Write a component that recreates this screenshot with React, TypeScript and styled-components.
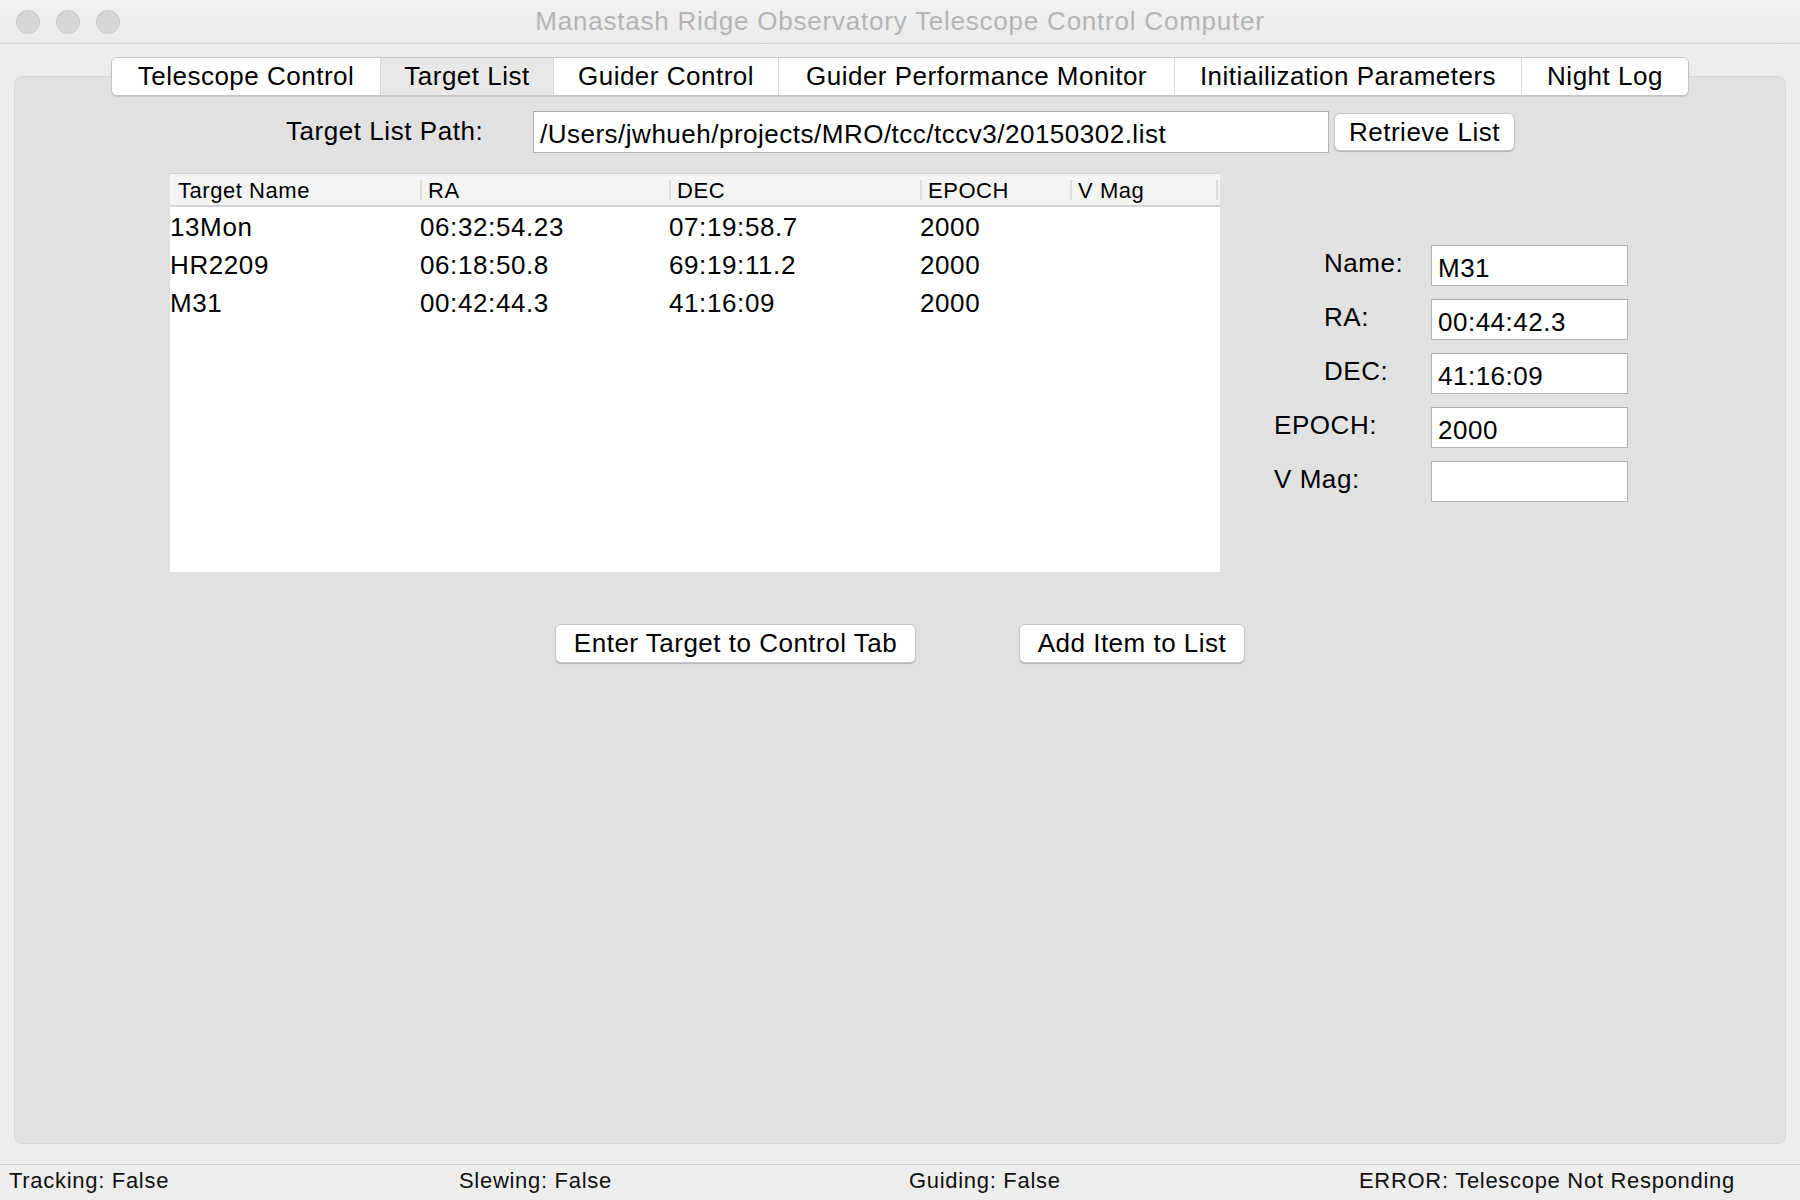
import React from 'react'
import styled, { createGlobalStyle } from 'styled-components'

const GlobalStyle = createGlobalStyle`
  html, body {
    margin: 0;
    padding: 0;
    background: #ececec;
    font-family: "Liberation Sans", Arial, sans-serif;
    color: #000;
  }
  * { box-sizing: border-box; }
`

const Window = styled.div`
  width: 1800px;
  height: 1200px;
  display: flex;
  flex-direction: column;
  background: #ececec;
  overflow: hidden;
`

const TitleBar = styled.div`
  height: 44px;
  flex-shrink: 0;
  display: grid;
  grid-template-columns: 1fr auto 1fr;
  align-items: center;
  background: linear-gradient(#f2f2f2, #ebebeb);
  border-bottom: 1px solid #d2d2d2;
`

const Lights = styled.div`
  display: flex;
  gap: 16px;
  padding-left: 16px;
`

const Light = styled.span`
  width: 24px;
  height: 24px;
  border-radius: 50%;
  background: #d6d6d6;
  border: 1px solid #c9c9c9;
`

const Title = styled.div`
  font-size: 26px;
  letter-spacing: 0.78px;
  color: #b4b4b4;
  padding-bottom: 1px;
`

const Main = styled.div`
  flex: 1;
  display: flex;
  flex-direction: column;
  align-items: center;
  padding: 13px 14px 20px;
`

const TabBar = styled.div`
  display: flex;
  height: 39px;
  background: #fff;
  border: 1px solid #c4c4c4;
  border-radius: 6px;
  box-shadow: 0 1px 1px rgba(0, 0, 0, 0.12);
  position: relative;
  z-index: 1;
  overflow: hidden;
`

const Tab = styled.div<{ $active?: boolean; $w: number }>`
  width: ${p => p.$w}px;
  display: flex;
  align-items: center;
  justify-content: center;
  font-size: 26px;
  letter-spacing: 0.5px;
  background: ${p => (p.$active ? '#e8e8e8' : '#fff')};
  border-left: 1px solid #dadada;
  &:first-child { border-left: none; }
`

const Panel = styled.div`
  align-self: stretch;
  flex: 1;
  margin-top: -20px;
  background: #e1e1e1;
  border: 1px solid #d7d7d7;
  border-radius: 8px;
  padding-top: 34px;
  display: flex;
  flex-direction: column;
`

const PathRow = styled.div`
  display: flex;
  align-items: center;
  padding-left: 271px;
`

const Label = styled.div<{ $indent?: number }>`
  font-size: 26px;
  letter-spacing: 0.55px;
  padding-left: ${p => p.$indent || 0}px;
  padding-bottom: 5px;
`

const PathLabel = styled(Label)`
  width: 247px;
  padding-bottom: 2px;
`

const Field = styled.div<{ $w: number; $h: number }>`
  width: ${p => p.$w}px;
  height: ${p => p.$h}px;
  background: #fff;
  border: 1px solid #b3b3b3;
  border-top-color: #a8a8a8;
  display: flex;
  align-items: center;
  padding: 5px 6px 0;
  font-size: 26px;
  letter-spacing: 0.5px;
  white-space: nowrap;
  overflow: hidden;
`

const Button = styled.div<{ $w: number }>`
  width: ${p => p.$w}px;
  height: 39px;
  display: flex;
  align-items: center;
  justify-content: center;
  background: #fff;
  border: 1px solid #c6c6c6;
  border-radius: 6px;
  box-shadow: 0 1px 1px rgba(0, 0, 0, 0.2);
  font-size: 26px;
  letter-spacing: 0.5px;
  white-space: nowrap;
`

const RetrieveButton = styled(Button)`
  margin-left: 5px;
  height: 38px;
`

const MiddleRow = styled.div`
  display: flex;
  align-items: flex-start;
  margin-top: 20px;
  padding-left: 155px;
`

const Table = styled.div`
  width: 1050px;
  height: 399px;
  background: #fff;
  border-top: 1px solid #d2d2d2;
`

const Cols = `grid-template-columns: 250px 249px 251px 150px 1fr;`

const HeaderRow = styled.div`
  display: grid;
  ${Cols}
  height: 33px;
  background: #f4f4f4;
  border-bottom: 2px solid #d2d2d2;
`

const HeaderCell = styled.div`
  display: flex;
  align-items: center;
  padding: 2px 0 0 8px;
  font-size: 22px;
  letter-spacing: 0.55px;
  position: relative;
  &:not(:first-child)::before, &:last-child::after {
    content: '';
    position: absolute;
    top: 6px;
    bottom: 5px;
    width: 2px;
    background: #dcdcdc;
  }
  &:not(:first-child)::before { left: 0; }
  &:last-child::after { right: 2px; }
`

const Row = styled.div`
  display: grid;
  ${Cols}
  height: 38px;
  align-items: center;
  padding-top: 2px;
`

const Cell = styled.div`
  font-size: 26px;
  letter-spacing: 0.6px;
  white-space: nowrap;
`

const Form = styled.div`
  margin-left: 54px;
  margin-top: 72px;
  display: grid;
  grid-template-columns: 157px 197px;
  row-gap: 13px;
  align-items: center;
`

const ButtonRow = styled.div`
  display: flex;
  justify-content: center;
  gap: 103px;
  margin-top: 52px;
`

const StatusBar = styled.div`
  height: 36px;
  flex-shrink: 0;
  border-top: 1px solid #cfcfcf;
  background: #ededed;
  display: grid;
  grid-template-columns: repeat(4, 450px);
  align-items: center;
  padding: 0 0 4px 9px;
`

const StatusItem = styled.div`
  font-size: 22px;
  letter-spacing: 0.7px;
  color: #111;
`

const tabs = [
  { label: 'Telescope Control', w: 268 },
  { label: 'Target List', w: 173, active: true },
  { label: 'Guider Control', w: 225 },
  { label: 'Guider Performance Monitor', w: 396 },
  { label: 'Initiailization Parameters', w: 347 },
  { label: 'Night Log', w: 167 },
]

const targets = [
  ['13Mon', '06:32:54.23', '07:19:58.7', '2000', ''],
  ['HR2209', '06:18:50.8', '69:19:11.2', '2000', ''],
  ['M31', '00:42:44.3', '41:16:09', '2000', ''],
]

const fields = [
  { label: 'Name:', value: 'M31', indent: 50 },
  { label: 'RA:', value: '00:44:42.3', indent: 50 },
  { label: 'DEC:', value: '41:16:09', indent: 50 },
  { label: 'EPOCH:', value: '2000', indent: 0 },
  { label: 'V Mag:', value: '', indent: 0 },
]

const App: React.FunctionComponent = () => {
  return (
    <Window>
      <GlobalStyle />
      <TitleBar>
        <Lights>
          <Light />
          <Light />
          <Light />
        </Lights>
        <Title>Manastash Ridge Observatory Telescope Control Computer</Title>
        <div />
      </TitleBar>
      <Main>
        <TabBar>
          {tabs.map(t => (
            <Tab key={t.label} $w={t.w} $active={t.active}>
              {t.label}
            </Tab>
          ))}
        </TabBar>
        <Panel>
          <PathRow>
            <PathLabel>Target List Path:</PathLabel>
            <Field $w={796} $h={42}>/Users/jwhueh/projects/MRO/tcc/tccv3/20150302.list</Field>
            <RetrieveButton $w={181}>Retrieve List</RetrieveButton>
          </PathRow>
          <MiddleRow>
            <Table>
              <HeaderRow>
                {['Target Name', 'RA', 'DEC', 'EPOCH', 'V Mag'].map(h => (
                  <HeaderCell key={h}>{h}</HeaderCell>
                ))}
              </HeaderRow>
              {targets.map(r => (
                <Row key={r[0]}>
                  {r.map((c, i) => (
                    <Cell key={i}>{c}</Cell>
                  ))}
                </Row>
              ))}
            </Table>
            <Form>
              {fields.map(f => (
                <React.Fragment key={f.label}>
                  <Label $indent={f.indent}>{f.label}</Label>
                  <Field $w={197} $h={41}>{f.value}</Field>
                </React.Fragment>
              ))}
            </Form>
          </MiddleRow>
          <ButtonRow>
            <Button $w={361}>Enter Target to Control Tab</Button>
            <Button $w={226}>Add Item to List</Button>
          </ButtonRow>
        </Panel>
      </Main>
      <StatusBar>
        <StatusItem>Tracking: False</StatusItem>
        <StatusItem>Slewing: False</StatusItem>
        <StatusItem>Guiding: False</StatusItem>
        <StatusItem>ERROR: Telescope Not Responding</StatusItem>
      </StatusBar>
    </Window>
  )
}

export default App
